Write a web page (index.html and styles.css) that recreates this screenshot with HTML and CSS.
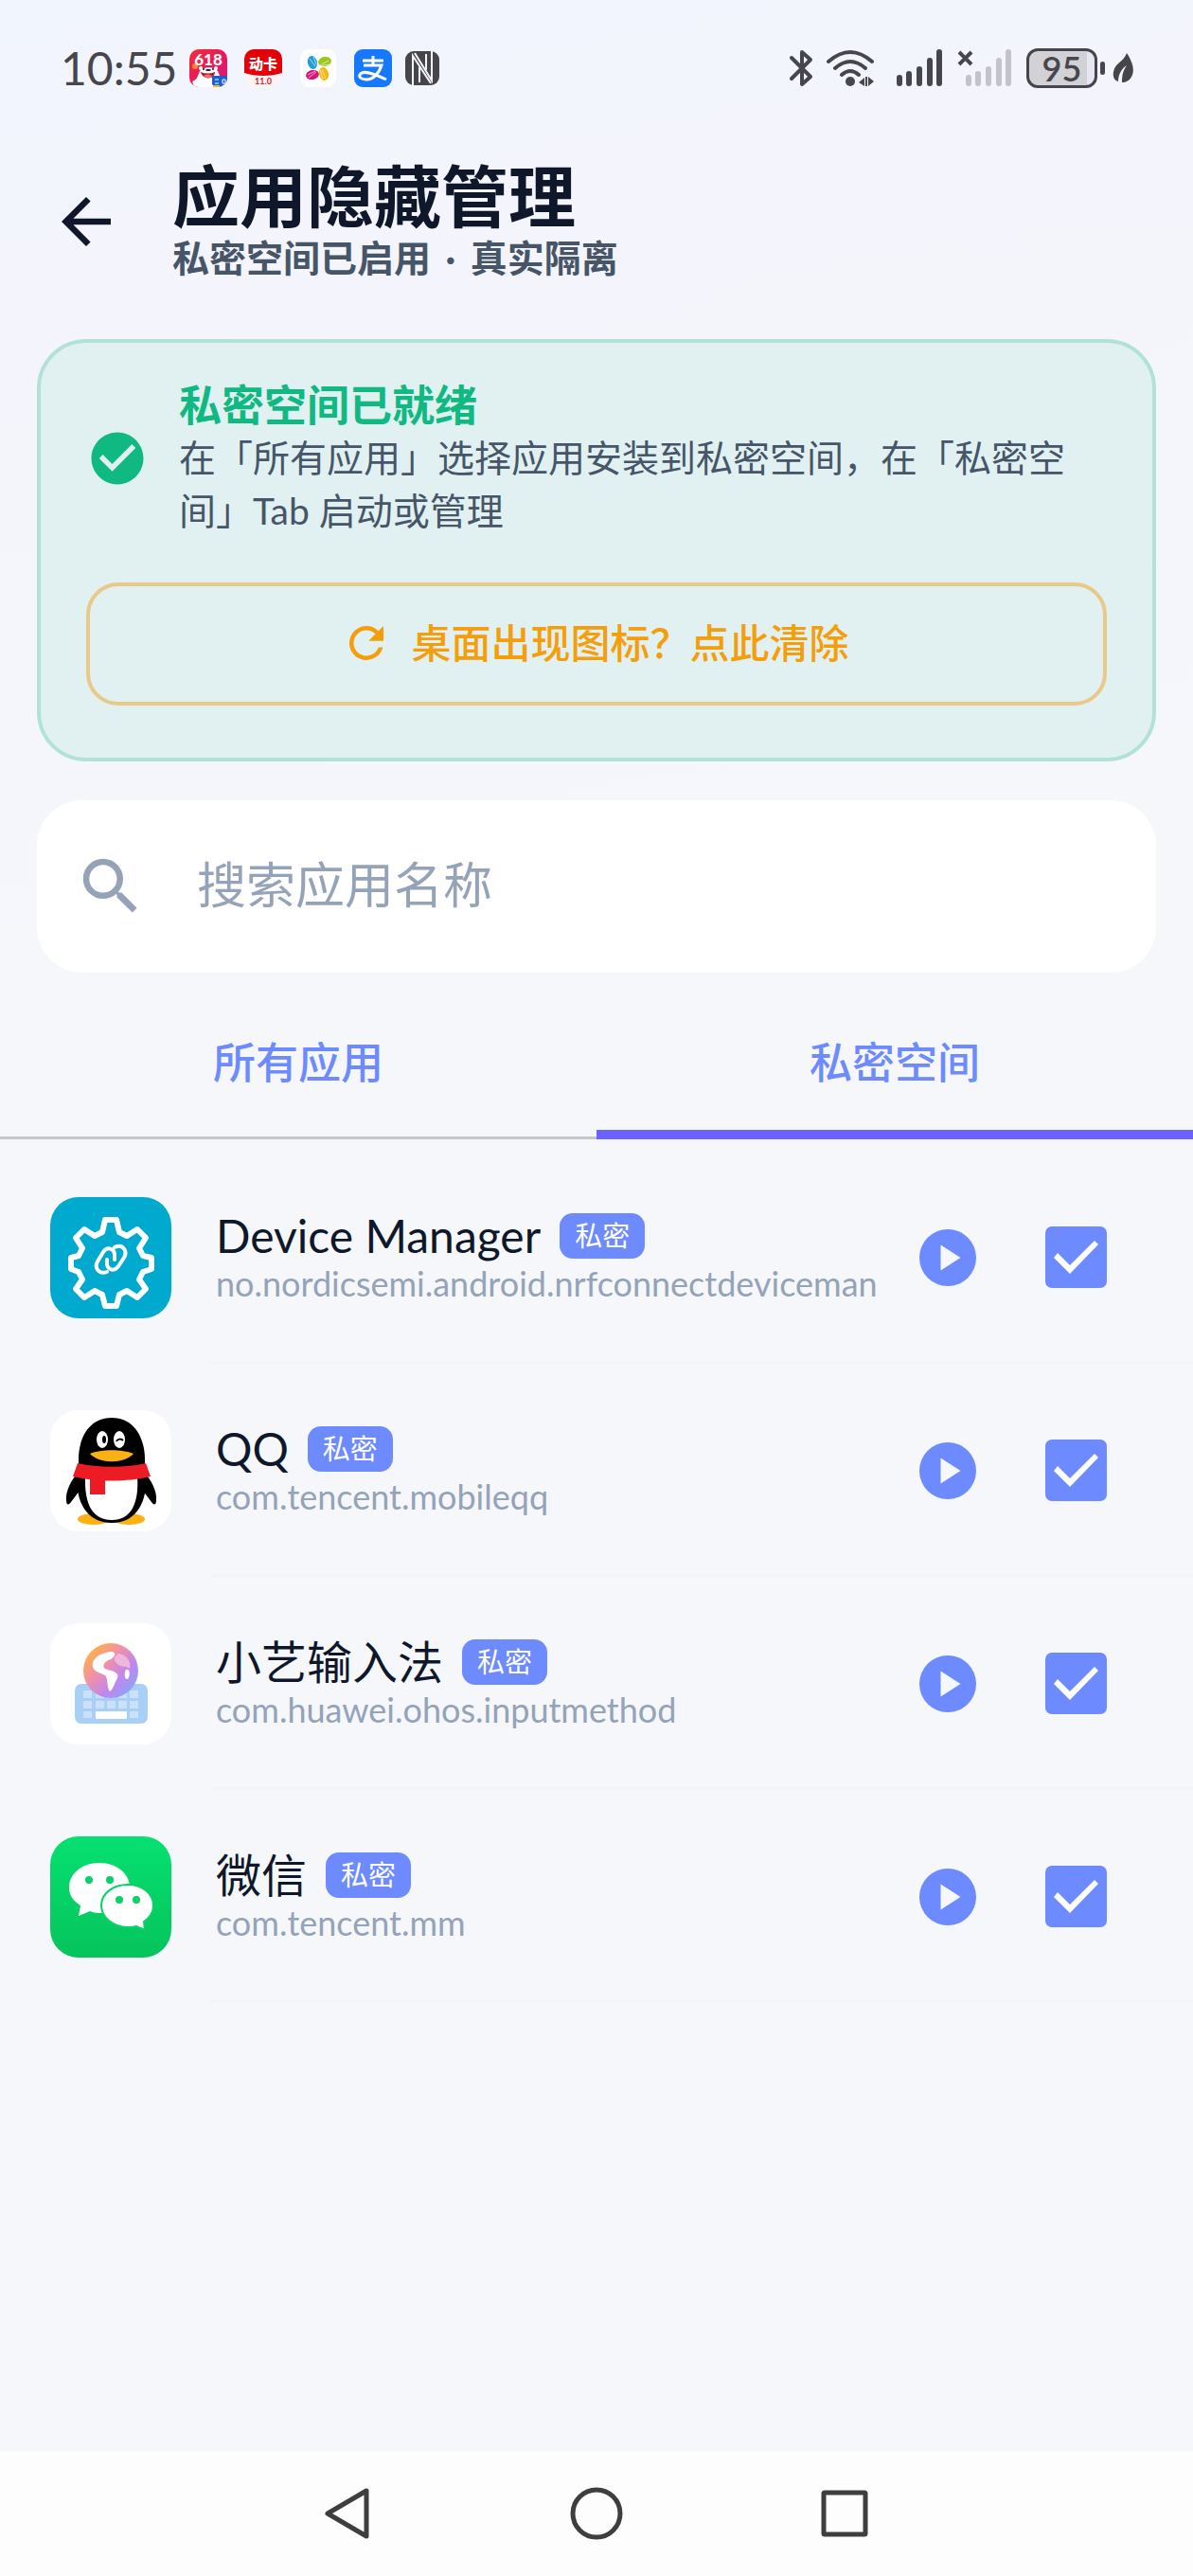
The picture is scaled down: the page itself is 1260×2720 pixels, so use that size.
FILE: index.html
```
<!DOCTYPE html>
<html lang="zh-CN">
<head>
    <meta charset="utf-8">
    <meta name="viewport" content="width=device-width, initial-scale=1">
    <title>应用隐藏管理</title>
    <link rel="stylesheet" href="styles.css">
</head>
<body>
    <svg width="0" height="0" class="defs" aria-hidden="true">
        <symbol id="play" viewBox="0 0 60 60">
            <circle cx="30" cy="30" r="30" fill="#6d8aff"/>
            <path d="M22.500 16.500v27L43.500 30z" fill="#f5f8ff"/>
        </symbol>
    </svg>

    <div class="statusbar">
        <span class="time">10:55</span>
        <div class="notifications">
            <svg class="app618" width="40" height="40" viewBox="0 0 40 40">
                <defs>
                    <linearGradient id="g618" x1="0" y1="0" x2="1" y2="1">
                        <stop offset="0" stop-color="#f0303c"/>
                        <stop offset=".5" stop-color="#ea1858"/>
                        <stop offset="1" stop-color="#d81a8c"/>
                    </linearGradient>
                    <clipPath id="c618"><rect width="40" height="40" rx="10"/></clipPath>
                </defs>
                <g clip-path="url(#c618)">
                    <rect width="40" height="40" fill="url(#g618)"/>
                    <circle cx="6" cy="18" r="3" fill="#ff8a30"/>
                    <path d="M3 34c3-1 5-3 6-6l2-5c4-5 15-5 19 0l3 7 7 4v8H6z" fill="#fff"/>
                    <circle cx="12" cy="20" r="2" fill="#fff"/>
                    <circle cx="28" cy="20" r="2" fill="#fff"/>
                    <ellipse cx="20" cy="22" rx="3" ry="1" fill="#1d1416"/>
                    <circle cx="15" cy="21" r="1" fill="#1d1416"/>
                    <circle cx="25" cy="21" r="1" fill="#1d1416"/>
                    <path d="M12 24c5 2 10 2 15 0 0 8-13 9-15 0z" fill="#b5172b"/>
                    <path d="M15 28c3-2 6-2 9 0-2 3-7 3-9 0z" fill="#ff6d6d"/>
                    <path d="M24 28h16v12H27l-3-3z" fill="#1b5fd0"/>
                    <path d="M27 32h4m-4 4h4m4-4h3v4h-3z" stroke="#fff" fill="none"/>
                    <path d="M25 38h7v2h-7z" fill="#ffb52c"/>
                </g>
                <text x="20" y="17" class="t618" text-anchor="middle">618</text>
            </svg>
            <svg class="app-dongka" width="40" height="40" viewBox="0 0 40 40">
                <clipPath id="cdk"><rect width="40" height="40" rx="10"/></clipPath>
                <g clip-path="url(#cdk)">
                    <rect width="40" height="40" fill="#fbf4f5"/>
                    <path d="M0 0h40v25c-12 4-28 4-40 0z" fill="#e30008"/>
                </g>
                <text x="20" y="21" class="tdk" text-anchor="middle">动卡</text>
                <text x="20" y="37" class="tver" text-anchor="middle">11.0</text>
            </svg>
            <svg class="app-petals" width="40" height="40" viewBox="0 0 40 40">
                <rect x="1" width="38" height="40" rx="9" fill="#fff"/>
                <ellipse cx="14" cy="14" rx="5" ry="7" transform="rotate(-15 14 14)" fill="#1c9fd8"/>
                <ellipse cx="27" cy="13" rx="7" ry="5" transform="rotate(-12 27 13)" fill="#9cc81c"/>
                <ellipse cx="14" cy="27" rx="7" ry="5" transform="rotate(-12 14 27)" fill="#d6157d"/>
                <ellipse cx="26" cy="26" rx="5" ry="7" transform="rotate(-15 26 26)" fill="#f5b90d"/>
                <path d="M11 10l6 8M15 8l3 8M22 17l9-5M22 18l10-2M10 30l8-6M9 27l8-4M24 21l4 10M22 22l3 9" stroke="#fff" stroke-width=".6"/>
            </svg>
            <svg class="app-pay" width="40" height="40" viewBox="0 0 40 40">
                <rect width="40" height="40" rx="9" fill="#1677ff"/>
                <path d="M9 12h22M20 7v10M10 17h19c-3 9-9 15-16 15-6 0-8-3-7-5 3-6 15-1 28 5" fill="none" stroke="#fff" stroke-width="3"/>
            </svg>
            <svg class="nfc" width="36" height="38" viewBox="0 0 36 38">
                <rect y="1" width="36" height="36" rx="9" fill="#46464a"/>
                <path d="M8 37V6l19 29M28 1v31L10 3M15 34V18M22 4v17" fill="none" stroke="#f3f5fd" stroke-width="2"/>
            </svg>
        </div>
        <div class="system">
            <svg class="bluetooth" width="26" height="42" viewBox="0 0 26 42">
                <path d="M3 10l20 20-9 8V4l9 8L3 32" fill="none" stroke="#46464c" stroke-width="4" stroke-linejoin="round" stroke-linecap="round"/>
            </svg>
            <svg class="wifi" width="50" height="42" viewBox="0 0 50 42">
                <path d="M2 14q23-20 46 0M9 21q16-14 32 0M16 28q9-8 18 0" fill="none" stroke="#46464c" stroke-width="4" stroke-linecap="round"/>
                <circle cx="25" cy="35" r="5" fill="#46464c"/>
                <path d="M34 36l6-5v9zM50 35l-6-5v10zM41 30h2v10h-2z" fill="#46464c"/>
            </svg>
            <svg class="signal" width="50" height="42" viewBox="0 0 50 42">
                <path d="M4 31v6M14 27v10M25 22v15M36 13v24M46 4v33" stroke="#46464e" stroke-width="6" stroke-linecap="round"/>
            </svg>
            <svg class="signal2" width="58" height="42" viewBox="0 0 58 42">
                <path d="M12 31v6M22 27v10M33 22v15M44 13v24M54 4v33" stroke="#c4c3cb" stroke-width="6" stroke-linecap="round"/>
                <path d="M2 4l13 13M15 4L2 17" stroke="#46464c" stroke-width="4"/>
            </svg>
            <span class="battery">95</span>
            <span class="battery-tip"></span>
            <svg class="leaf" width="22" height="34" viewBox="0 0 22 34">
                <path d="M15 1c6 9 9 18 5 25-2 4-6 6-10 6 0-8 1-12 5-18C9 18 6 24 6 31 2 30 0 26 1 21 2 12 12 10 15 1z" fill="#46464a"/>
            </svg>
        </div>
    </div>

    <header class="header">
        <button class="back" aria-label="返回">
            <svg width="78" height="78" viewBox="0 0 24 24">
                <path d="M20 11H7.830l5.590-5.590L12 4l-8 8 8 8 1.410-1.410L7.830 13H20v-2z" fill="#0f172a"/>
            </svg>
        </button>
        <div class="titles">
            <h1>应用隐藏管理</h1>
            <p class="subtitle">私密空间已启用 <span class="dot">·</span> 真实隔离</p>
        </div>
    </header>

    <main>
        <section class="card">
            <div class="card-info">
                <svg class="ok" width="66" height="66" viewBox="0 0 24 24">
                    <path d="M12 2C6.480 2 2 6.480 2 12s4.480 10 10 10 10-4.480 10-10S17.520 2 12 2zm-2 15l-5-5 1.410-1.410L10 14.170l7.590-7.590L19 8l-9 9z" fill="#10b981"/>
                </svg>
                <div>
                    <h2>私密空间已就绪</h2>
                    <p>在「所有应用」选择应用安装到私密空间，在「私密空间」Tab 启动或管理</p>
                </div>
            </div>
            <button class="clear">
                <svg width="54" height="54" viewBox="0 0 24 24">
                    <path d="M17.650 6.350A7.958 7.958 0 0 0 12 4a8 8 0 1 0 7.730 10h-2.080A6 6 0 1 1 12 6c1.660 0 3.140.690 4.220 1.780L13 11h7V4l-2.350 2.350z" fill="#f59e0b"/>
                </svg>
                桌面出现图标？点此清除
            </button>
        </section>

        <label class="search">
            <svg width="78" height="78" viewBox="0 0 24 24">
                <path d="M15.500 14h-.79l-.28-.27A6.471 6.471 0 0 0 16 9.500 6.500 6.500 0 1 0 9.500 16c1.610 0 3.090-.59 4.230-1.570l.27.28v.79l5 4.990L20.490 19l-4.990-5zm-6 0C7.010 14 5 11.990 5 9.500S7.010 5 9.500 5 14 7.010 14 9.500 11.990 14 9.500 14z" fill="#94a3b8"/>
            </svg>
            <input type="text" placeholder="搜索应用名称" aria-label="搜索应用名称">
        </label>

        <div class="tabs" role="tablist">
            <button class="tab" role="tab" aria-selected="false">所有应用</button>
            <button class="tab active" role="tab" aria-selected="true">私密空间</button>
        </div>

        <ul class="list">
            <li class="row">
                <svg class="app-icon" viewBox="0 0 128 128">
                    <rect width="128" height="128" rx="30" fill="#00a9ce"/>
                    <g fill="none" stroke="#fff" stroke-linejoin="round" stroke-linecap="round">
                        <path d="M58 24h12l3 13 8 4 11-7 9 9-7 11 4 8 9 2v12l-9 3-4 8 7 10-9 9-11-7-8 4-3 12H58l-3-12-8-4-11 7-9-9 7-10-4-8-8-3V64l8-2 4-8-7-11 9-9 11 7 8-4z" stroke-width="6"/>
                        <path d="M60 79c-8 3-14-4-10-11l6-10c4-6 11-4 12 2v6" stroke-width="4"/>
                        <path d="M68 53c9-4 14 4 10 11l-6 9c-4 6-11 4-12-2v-5" stroke-width="4"/>
                    </g>
                </svg>
                <div class="info">
                    <div class="name"><span>Device Manager</span><span class="badge">私密</span></div>
                    <div class="package">no.nordicsemi.android.nrfconnectdeviceman</div>
                </div>
                <button class="play" aria-label="启动 Device Manager"><svg width="60" height="60"><use href="#play"/></svg></button>
                <input class="check" type="checkbox" aria-label="Device Manager" checked>
            </li>
            <li class="row">
                <svg class="app-icon" viewBox="0 0 128 128">
                    <rect width="128" height="128" rx="30" fill="#fff"/>
                    <ellipse cx="46" cy="115" rx="17" ry="6" fill="#fbb014"/>
                    <ellipse cx="83" cy="115" rx="17" ry="6" fill="#fbb014"/>
                    <path d="M30 65c-8 9-14 21-13 30 0 6 3 5 5 2l9-12zM99 65c8 9 14 21 13 30 0 6-3 5-5 2L98 85z" fill="#000"/>
                    <path d="M30 56C29 28 42 8 65 8s36 20 35 48c6 39-8 63-35 63S23 95 30 56z" fill="#000"/>
                    <path d="M37 70c-1 30 8 46 28 46s29-17 27-46z" fill="#fff"/>
                    <path d="M29 56c22 5 50 5 72 0l5 14c-24 6-58 6-82 0z" fill="#ed1c24"/>
                    <path d="M42 69l16 2v18H42z" fill="#ed1c24"/>
                    <ellipse cx="55" cy="31" rx="6" ry="9" fill="#fff"/>
                    <ellipse cx="73" cy="31" rx="6" ry="9" fill="#fff"/>
                    <ellipse cx="57" cy="31" rx="2" ry="4" fill="#000"/>
                    <path d="M70 33c1-3 5-3 7-1" fill="none" stroke="#000" stroke-width="2"/>
                    <path d="M42 46c12-5 34-5 46 0-10 11-36 11-46 0z" fill="#fbb014"/>
                </svg>
                <div class="info">
                    <div class="name"><span>QQ</span><span class="badge">私密</span></div>
                    <div class="package">com.tencent.mobileqq</div>
                </div>
                <button class="play" aria-label="启动 QQ"><svg width="60" height="60"><use href="#play"/></svg></button>
                <input class="check" type="checkbox" aria-label="QQ" checked>
            </li>
            <li class="row">
                <svg class="app-icon" viewBox="0 0 128 128">
                    <defs>
                        <linearGradient id="globe" x1=".1" y1=".1" x2=".9" y2=".9">
                            <stop offset="0" stop-color="#ffb53c"/>
                            <stop offset=".35" stop-color="#f291a5"/>
                            <stop offset=".7" stop-color="#bf86f2"/>
                            <stop offset="1" stop-color="#86a8f5"/>
                        </linearGradient>
                    </defs>
                    <rect width="128" height="128" rx="30" fill="#fff"/>
                    <rect x="26" y="64" width="77" height="42" rx="7" fill="#a8d0f6"/>
                    <path d="M35 71h9v8h-9zM48 71h9v8h-9zM60 71h9v8h-9zM72 71h9v8h-9zM84 71h9v8h-9zM35 82h9v8h-9zM48 82h9v8h-9zM60 82h9v8h-9zM72 82h9v8h-9zM84 82h9v8h-9zM35 93h9v7h-9zM84 93h9v7h-9z" fill="#cbe1fb"/>
                    <rect x="48" y="93" width="33" height="8" rx="1" fill="#fff"/>
                    <circle cx="64" cy="50" r="29" fill="url(#globe)"/>
                    <path d="M45 46c-2-7 6-15 20-16 6 1 3 5-1 8-6 2-10 7-6 10 8 3 15 3 13 10-3 5-4 11-8 14-4-5-1-12-5-17-6-3-12-4-13-9z" fill="#fff"/>
                    <path d="M72 32c8 1 14 8 12 16-4-4-11-1-14-6-4-4-2-7 2-10z" fill="#eeb8dd"/>
                    <path d="M80 49c4-2 5 5 2 10-4 1-4-7-2-10z" fill="#fff"/>
                </svg>
                <div class="info">
                    <div class="name"><span>小艺输入法</span><span class="badge">私密</span></div>
                    <div class="package">com.huawei.ohos.inputmethod</div>
                </div>
                <button class="play" aria-label="启动 小艺输入法"><svg width="60" height="60"><use href="#play"/></svg></button>
                <input class="check" type="checkbox" aria-label="小艺输入法" checked>
            </li>
            <li class="row">
                <svg class="app-icon" viewBox="0 0 128 128">
                    <defs>
                        <linearGradient id="wechat" x1="0" y1="0" x2="0" y2="1">
                            <stop offset="0" stop-color="#06e070"/>
                            <stop offset="1" stop-color="#05c45c"/>
                        </linearGradient>
                    </defs>
                    <rect width="128" height="128" rx="30" fill="url(#wechat)"/>
                    <path d="M52 28c18 0 32 11 32 26S70 81 52 81c-4 0-7-1-10-2l-12 5 2-11c-8-5-12-11-12-19 0-15 14-26 32-26z" fill="#fff"/>
                    <path d="M82 51c15 0 27 9 27 22 0 7-4 13-10 17l1 9-9-4c-3 1-6 1-9 1-15 0-28-10-28-23s13-22 28-22z" fill="#fff" stroke="#06d267" stroke-width="2"/>
                    <circle cx="41" cy="46" r="4" fill="#06d267"/>
                    <circle cx="63" cy="46" r="4" fill="#06d267"/>
                    <circle cx="73" cy="67" r="4" fill="#06d267"/>
                    <circle cx="91" cy="67" r="4" fill="#06d267"/>
                </svg>
                <div class="info">
                    <div class="name"><span>微信</span><span class="badge">私密</span></div>
                    <div class="package">com.tencent.mm</div>
                </div>
                <button class="play" aria-label="启动 微信"><svg width="60" height="60"><use href="#play"/></svg></button>
                <input class="check" type="checkbox" aria-label="微信" checked>
            </li>
        </ul>
    </main>

    <nav class="navbar">
        <button aria-label="返回"><svg width="60" height="60" viewBox="0 0 60 60"><path d="M50 6v48L9 30z"/></svg></button>
        <button aria-label="主屏幕"><svg width="60" height="60" viewBox="0 0 60 60"><circle cx="30" cy="30" r="25"/></svg></button>
        <button aria-label="最近任务"><svg width="60" height="60" viewBox="0 0 60 60"><rect x="7" y="8" width="44" height="44" rx="1"/></svg></button>
    </nav>
</body>
</html>
```
FILE: styles.css
```
* {
    box-sizing: border-box;
}
body {
    margin: 0;
    min-height: 100vh;
    display: flex;
    flex-direction: column;
    background: linear-gradient(170deg, #f1f5fe 0, #f4f5fc 300px, #f5f7fb 1100px);
    color: #0f172a;
    font-family: Lato, "Noto Sans CJK SC", sans-serif;
}
h1, h2, p, ul {
    margin: 0;
    padding: 0;
}
button {
    margin: 0;
    padding: 0;
    border: 0;
    background: none;
    font-family: inherit;
    cursor: pointer;
}
svg {
    display: block;
    flex: none;
}
.defs {
    position: absolute;
}

/* status bar */
.statusbar {
    display: flex;
    align-items: center;
    height: 144px;
    padding: 0 63px 0 64px;
    color: #46464c;
}
.time {
    width: 120px;
    font-size: 48px;
    line-height: 60px;
}
.notifications {
    display: flex;
    align-items: center;
    gap: 18px;
    margin-left: 16px;
}
.nfc {
    margin-left: -4px;
}
.system {
    display: flex;
    align-items: center;
    margin-left: auto;
}
.wifi {
    margin-left: 14px;
}
.signal {
    margin-left: 23px;
}
.signal2 {
    margin-left: 15px;
}
.battery {
    width: 75px;
    height: 42px;
    margin-left: 15px;
    border: 3px solid #46444e;
    border-radius: 12px;
    background: linear-gradient(90deg, #d2d1d6 88%, #e8e6f0 88%);
    font-size: 36px;
    font-weight: 600;
    line-height: 36px;
    text-align: center;
}
.battery-tip {
    width: 5px;
    height: 14px;
    margin: 0 8px 0 3px;
    border-radius: 3px;
    background: #46444e;
}
.t618 {
    font-size: 17px;
    font-weight: 900;
    fill: #fff;
}
.tdk {
    font-size: 15px;
    font-weight: 900;
    fill: #fff;
}
.tver {
    font-size: 9px;
    font-weight: 700;
    fill: #d8202a;
}

/* header */
.header {
    display: flex;
    align-items: center;
    gap: 52px;
    height: 180px;
    padding: 0 52px;
}
.titles {
    padding-bottom: 4px;
}
h1 {
    font-size: 71px;
    line-height: 80px;
    font-weight: 700;
}
.subtitle {
    color: #475569;
    font-size: 39px;
    line-height: 50px;
    font-weight: 700;
}
.dot {
    margin: 0 6px;
}

/* status card */
main {
    flex: 1;
}
.card {
    margin: 34px 39px 0;
    padding: 39px 48px 55px;
    border: 4px solid #b1e2d8;
    border-radius: 52px;
    background: #e1f1f2;
}
.card-info {
    display: flex;
    align-items: center;
    gap: 32px;
}
.card-info h2 {
    color: #10b981;
    font-size: 45px;
    line-height: 54px;
    font-weight: 700;
}
.card-info p {
    color: #475569;
    font-size: 39px;
    line-height: 56px;
}
.clear {
    display: flex;
    align-items: center;
    justify-content: center;
    gap: 20px;
    width: 100%;
    height: 130px;
    margin-top: 48px;
    padding: 0 3px 2px 0;
    border: 4px solid #e9c888;
    border-radius: 34px;
    color: #f59e0b;
    font-size: 42px;
    font-weight: 500;
    line-height: 60px;
}

/* search */
.search {
    display: flex;
    align-items: center;
    gap: 52px;
    height: 182px;
    margin: 41px 39px 0;
    padding: 0 39px;
    border-radius: 48px;
    background: #fff;
}
.search input {
    flex: 1;
    min-width: 0;
    height: 80px;
    padding: 0 0 4px;
    border: 0;
    outline: 0;
    background: none;
    color: #0f172a;
    font-family: inherit;
    font-size: 52px;
    line-height: 76px;
}
.search input::placeholder {
    color: #94a3b8;
    opacity: 1;
}

/* tabs */
.tabs {
    display: flex;
    height: 176px;
    border-bottom: 3px solid #c6c7ca;
}
.tab {
    flex: 1;
    padding-top: 24px;
    margin-bottom: -3px;
    border-bottom: 10px solid transparent;
    color: #6d8aff;
    font-size: 45px;
    font-weight: 500;
    line-height: 60px;
}
.tab.active {
    border-bottom-color: #6c63ff;
}

/* app list */
.list {
    padding-top: 12px;
    list-style: none;
}
.row {
    display: flex;
    align-items: center;
    height: 225px;
    padding: 0 91px 0 53px;
    background: linear-gradient(#f2f4f9, #f2f4f9) 222px 100% / 100% 3px no-repeat;
}
.app-icon {
    width: 128px;
    height: 128px;
}
.info {
    flex: 1;
    min-width: 0;
    margin-left: 47px;
    padding-bottom: 1px;
}
.name {
    display: flex;
    align-items: center;
    gap: 20px;
    font-size: 48px;
    line-height: 56px;
}
.badge {
    padding: 0 16px;
    border-radius: 14px;
    background: #6d8aff;
    color: #fff;
    font-size: 29px;
    line-height: 48px;
}
.package {
    color: #94a3b8;
    font-size: 36px;
    line-height: 44px;
    white-space: nowrap;
}
.play {
    margin-right: 73px;
}
.check {
    appearance: none;
    width: 65px;
    height: 65px;
    margin: 0;
    border: 2px solid #6d8aff;
    border-radius: 7px;
}
.check:checked {
    background: #6d8aff;
}
.check:checked::before {
    content: "";
    display: block;
    width: 61px;
    height: 61px;
    background: #fff;
    clip-path: polygon(7px 31px, 11px 26px, 24px 39px, 50px 13px, 54px 17px, 24px 48px);
}

/* system navigation */
.navbar {
    display: flex;
    justify-content: center;
    align-items: center;
    height: 132px;
    background: #fdfdfd;
}
.navbar button {
    display: flex;
    justify-content: center;
    width: 263px;
}
.navbar svg {
    fill: none;
    stroke: #3e3e3e;
    stroke-width: 5;
    stroke-linejoin: round;
}
```
